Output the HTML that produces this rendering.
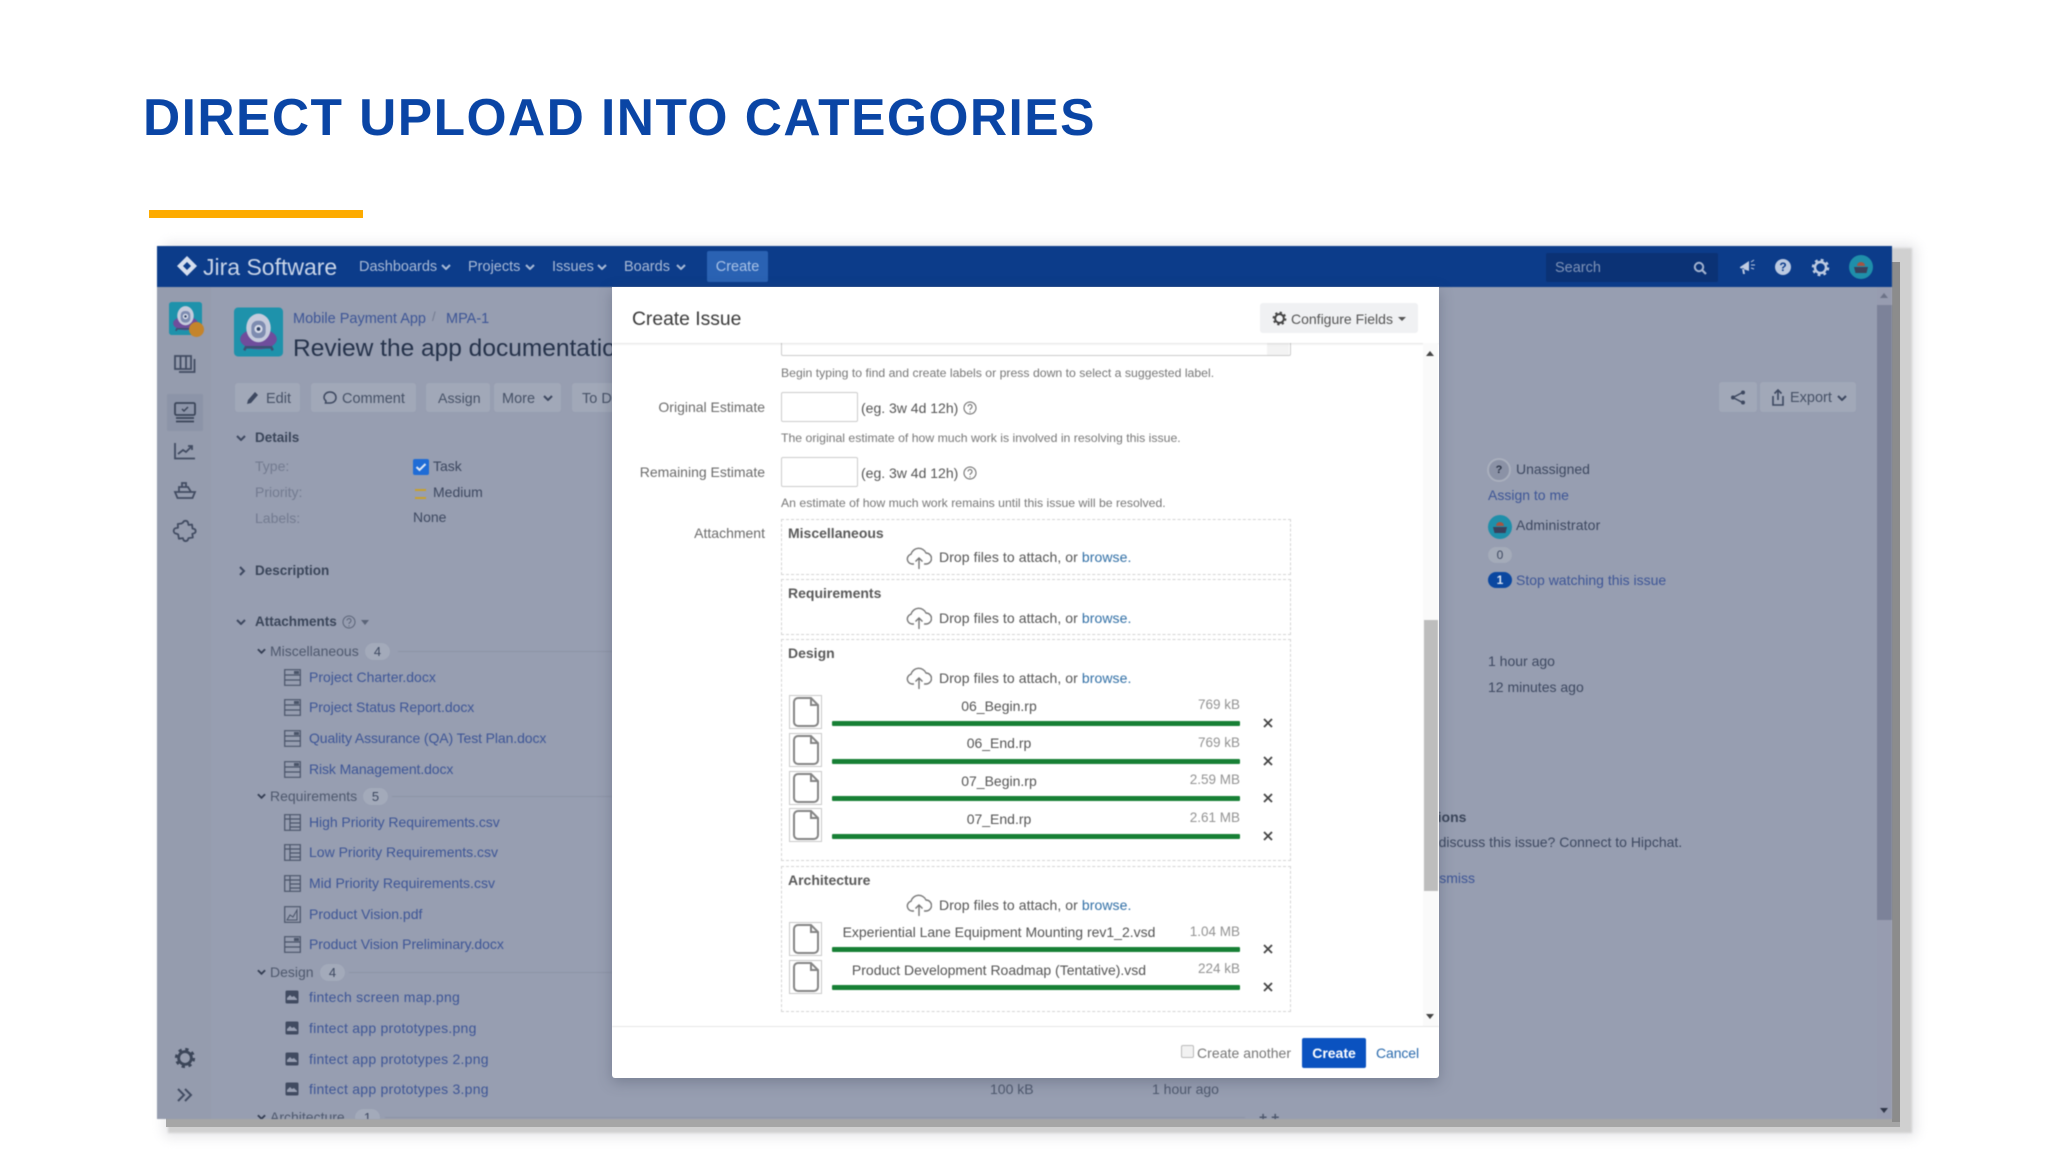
<!DOCTYPE html>
<html><head><meta charset="utf-8"><title>Direct Upload Into Categories</title>
<style>
html,body{margin:0;padding:0;background:#fff}
body{width:2048px;height:1152px;overflow:hidden;position:relative;font-family:"Liberation Sans",Arial,sans-serif}
.a{position:absolute}
.t{position:absolute;white-space:nowrap;line-height:20px;height:20px;font-size:14px;color:#3d4860}
.l{color:#3d5596}
.g{color:#737b90}
.b{font-weight:bold}
.n{color:#a9bad6;font-size:14.5px}
.btn{position:absolute;background:#a1a8b8;top:383px;height:29px;border-radius:3px}
.bd{position:absolute;background:#a3aaba;border-radius:9px;height:17px;width:25px;text-align:center;line-height:17px;font-size:13px;color:#3d4860}
.ln{position:absolute;height:1px;background:#8d94a7;right:0}
svg{position:absolute;overflow:visible}
.m{color:#6b6b6b}
.h{font-size:12.25px;color:#777}
.box{position:absolute;left:781px;width:508px;border:1px dashed #d4d4d4;box-sizing:content-box}
.bar{position:absolute;left:832px;width:408px;height:5px;background:#178035;border-radius:1px}
.lk{color:#2f6ea5}
.bh{font-weight:bold;color:#5a5a5a;font-size:14px}
.dp{letter-spacing:.08px;color:#555}
.sz{font-size:13.5px;color:#939393}
.hd{font-size:13.5px;color:#3a4559}
.inp{position:absolute;left:781px;width:75px;height:28px;border:1px solid #ccc;border-radius:2px;background:#fff}
.png{letter-spacing:.25px}
</style></head><body>
<svg width="0" height="0" style="position:absolute">
<defs>
<symbol id="ch" viewBox="0 0 10 6"><path d="M1 1l4 4 4-4" fill="none" stroke="currentColor" stroke-width="2"/></symbol>
<symbol id="doc" viewBox="0 0 33 34"><rect x=".5" y=".5" width="32" height="33" fill="#fff" stroke="#c9c9c9"/><path d="M9 3h13l7 7v17a4 4 0 0 1-4 4H9a4 4 0 0 1-4-4V7a4 4 0 0 1 4-4zM22 3v7h7" fill="none" stroke="#858585" stroke-width="2"/></symbol>
<symbol id="cl" viewBox="0 0 26 24"><path d="M8 18H6a5 5 0 0 1-1-9.800A8 8 0 0 1 20 7a5.500 5.500 0 0 1 0 11h-2" fill="none" stroke="#777" stroke-width="1.400"/><path d="M13 23V12M9.500 15.500L13 12l3.500 3.500" fill="none" stroke="#777" stroke-width="1.400"/></symbol>
<symbol id="x" viewBox="0 0 12 12"><path d="M2 2l8 8M10 2l-8 8" stroke="#444" stroke-width="1.800" fill="none"/></symbol>
<symbol id="q" viewBox="0 0 14 14"><circle cx="7" cy="7" r="6" fill="none" stroke="currentColor"/><path d="M5 5.500a2 2 0 1 1 3 1.800c-.8.500-1 .8-1 1.700M7 10.500v1" fill="none" stroke="currentColor"/></symbol>
<symbol id="w" viewBox="0 0 17 17"><path d="M.7.700h15.600v15.600H.7zM.7 6h15.600M.7 11h15.600" fill="none" stroke="#4a5469" stroke-width="1.200"/><rect x="10" y="2" width="5" height="3" fill="#4a5469"/></symbol>
<symbol id="c" viewBox="0 0 17 17"><path d="M.7.700h15.600v15.600H.7zM.7 5h15.600M6 .7v15.600M6 9h10M6 13h10" fill="none" stroke="#4a5469" stroke-width="1.200"/></symbol>
<symbol id="p" viewBox="0 0 17 17"><path d="M.7.700h15.600v15.600H.7z" fill="none" stroke="#4a5469" stroke-width="1.200"/><path d="M3 14l3-5 3 2 4-7v10z" fill="none" stroke="#4a5469"/></symbol>
<symbol id="im" viewBox="0 0 14 14"><rect width="13" height="13" x=".5" y=".5" rx="1.500" fill="#414b61"/><path d="M2 8l3-3 2 2 2-1 3 3v1H2z" fill="#99a0b3"/></symbol>
<symbol id="gr" viewBox="0 0 20 20"><circle cx="10" cy="10" r="5.800" fill="none" stroke="currentColor" stroke-width="2.600"/><circle cx="10" cy="10" r="8" fill="none" stroke="currentColor" stroke-width="2.400" stroke-dasharray="3 3.280"/></symbol>
<symbol id="rob" viewBox="0 0 48 48"><rect width="48" height="48" rx="4" fill="#1e92ab"/><ellipse cx="24" cy="31" rx="18" ry="10" fill="#6f4d9c"/><path d="M12 38l-2 4M36 38l2 4M12 39h24" stroke="#3c5174" stroke-width="2.500"/><ellipse cx="24" cy="20" rx="12" ry="14" fill="#c5cbdc"/><rect x="17" y="13" width="14" height="17" rx="6" fill="#7e8cb0"/><circle cx="24" cy="21" r="4" fill="#d7dcea"/><circle cx="24" cy="21" r="1.800" fill="#2f4063"/></symbol>
<symbol id="ad" viewBox="0 0 24 24"><circle cx="12" cy="12" r="12" fill="#1f8faa"/><path d="M5 12h14l-1.500 6h-11z" fill="#39415c"/><path d="M8 11a4 4 0 0 1 8 0z" fill="#a35443"/></symbol>
</defs></svg>

<div class="t b" id="ttl" style="left:143px;top:91px;height:52px;line-height:52px;font-size:51.500px;letter-spacing:1.450px;color:#0a45a5">DIRECT UPLOAD INTO CATEGORIES</div>
<div class="a" style="left:149px;top:210px;width:214px;height:8px;background:#fdab00"></div>

<div class="a" style="left:168px;top:248px;width:1744px;height:885px;background:#d0d0d0;box-shadow:0 0 12px 4px #e6e6e9;filter:blur(1px)"></div>
<div class="a" style="left:166px;top:262px;width:1734px;height:865px;background:#a6a6a6"></div>
<div class="a" style="left:1892px;top:262px;width:8px;height:860px;background:#8c8c8c"></div>

<div class="a" id="fr" style="left:157px;top:246px;width:1735px;height:873px;background:#979eb1;overflow:hidden;filter:blur(.5px)">
<div class="a" style="left:0;top:0;width:54px;height:873px;background:#959cae"></div>
<div class="a" style="left:0;top:0;width:1735px;height:41px;background:#0c3c8a"></div>
<div class="a" style="left:1720px;top:41px;width:15px;height:832px;background:#979cb0"></div>
<div class="a" style="left:1720px;top:59px;width:15px;height:615px;background:#7c8299"></div>
</div>

<div class="a" style="left:157px;top:246px;width:1735px;height:873px;overflow:hidden;filter:blur(.5px)">
<div style="position:absolute;left:-157px;top:-246px;width:2048px;height:1152px">

<!-- Nav -->
<svg style="left:176px;top:255px" width="22" height="22" viewBox="0 0 22 22"><path d="M11 1l10 10-10 10L1 11z" fill="#d5deee"/><path d="M11 7l4 4-4 4-4-4z" fill="#0c3c8a"/></svg>
<div class="t" style="left:203px;top:255px;height:24px;line-height:24px;font-size:23px;color:#c9d5e8">Jira Software</div>
<div class="t n" style="left:359px;top:257px">Dashboards</div><svg style="left:441px;top:264px;color:#a9bad6" width="10" height="6"><use href="#ch"/></svg>
<div class="t n" style="left:468px;top:257px">Projects</div><svg style="left:525px;top:264px;color:#a9bad6" width="10" height="6"><use href="#ch"/></svg>
<div class="t n" style="left:552px;top:257px">Issues</div><svg style="left:597px;top:264px;color:#a9bad6" width="10" height="6"><use href="#ch"/></svg>
<div class="t n" style="left:624px;top:257px">Boards</div><svg style="left:676px;top:264px;color:#a9bad6" width="10" height="6"><use href="#ch"/></svg>
<div class="a" style="left:707px;top:251px;width:61px;height:31px;background:#2a62b3;border-radius:2px"></div>
<div class="t" style="left:707px;width:61px;text-align:center;top:257px;font-size:14.500px;color:#a9c2e6">Create</div>
<div class="a" style="left:1546px;top:253px;width:172px;height:29px;background:#0b3275;border-radius:2px"></div>
<div class="t" style="left:1555px;top:258px;font-size:14.500px;color:#7f93b7">Search</div>
<svg style="left:1693px;top:261px" width="14" height="14" viewBox="0 0 14 14"><circle cx="6" cy="6" r="4.200" fill="none" stroke="#a3b3cf" stroke-width="2"/><path d="M9 9l4 4" stroke="#a3b3cf" stroke-width="2.200"/></svg>
<svg style="left:1739px;top:258px" width="17" height="17" viewBox="0 0 17 17"><path d="M1 9l9-6v10L1 10zM3 10l1 6h2l-1-5.500" fill="#c0cce2"/><path d="M12 4l3-2M12 7h4M12 10l3 1" stroke="#c0cce2"/></svg>
<div class="a" style="left:1775px;top:259px;width:16px;height:16px;border-radius:50%;background:#bccae1;text-align:center;line-height:16px;font-size:12px;font-weight:bold;color:#0c3c8a">?</div>
<svg style="left:1811px;top:258px;color:#bccae1" width="19" height="19"><use href="#gr"/></svg>
<svg style="left:1849px;top:255px" width="24" height="24"><use href="#ad"/></svg>

<!-- Left sidebar -->
<svg style="left:169px;top:302px" width="33" height="33"><use href="#rob"/></svg>
<div class="a" style="left:189px;top:322px;width:15px;height:15px;border-radius:50%;background:#c4842b"></div>
<svg style="left:174px;top:355px" width="22" height="19" viewBox="0 0 22 19"><path d="M1 1h16v13H1zM6.500 1v13M12 1v13M20.500 4v13H5" fill="none" stroke="#424c62" stroke-width="1.800"/></svg>
<div class="a" style="left:167px;top:394px;width:36px;height:37px;background:#8c94a8;border-radius:2px"></div>
<svg style="left:174px;top:402px" width="22" height="21" viewBox="0 0 22 21"><rect x="1" y="1" width="20" height="12" rx="1.500" fill="none" stroke="#3b4559" stroke-width="1.800"/><path d="M8 7l2 2 4-4" fill="none" stroke="#3b4559" stroke-width="1.500"/><path d="M2 16h18M2 19.500h18" stroke="#3b4559" stroke-width="1.800"/></svg>
<svg style="left:174px;top:443px" width="22" height="17" viewBox="0 0 22 17"><path d="M1 0v15.500h20M4 11l5-4 3 2 6-6M14 3h4v4" fill="none" stroke="#424c62" stroke-width="1.800"/></svg>
<svg style="left:174px;top:481px" width="22" height="18" viewBox="0 0 22 18"><path d="M1 11h20l-2.500 6H3.500zM5 11V6h9l3 5M8 6V2h4v4" fill="none" stroke="#424c62" stroke-width="1.800"/></svg>
<svg style="left:174px;top:519px" width="22" height="22" viewBox="0 0 22 22"><path d="M9 3.500a2.700 2.700 0 0 1 5 0L14.500 6l3.500-.5.500 4 1.800.5a2.300 2.300 0 0 1 0 4.200l-2 .6.500 3.700-4.300.6-.6 1.600a2.500 2.500 0 0 1-4.600-.3l-.4-1.300-4 .6-.7-4.200-1.800-.8A2.400 2.400 0 0 1 2.700 9L4 8.700 3.800 5l3.700-.5z" fill="none" stroke="#424c62" stroke-width="1.800" stroke-linejoin="round"/></svg>
<svg style="left:174px;top:1047px;color:#3c4659" width="22" height="22"><use href="#gr"/></svg>
<svg style="left:176px;top:1088px" width="18" height="14" viewBox="0 0 18 14"><path d="M2 1l6 6-6 6M9 1l6 6-6 6" fill="none" stroke="#424c62" stroke-width="2"/></svg>

<!-- Issue header -->
<svg style="left:234px;top:307px" width="49" height="50"><use href="#rob"/></svg>
<div class="t l" style="left:293px;top:309px;font-size:14.500px">Mobile Payment App</div>
<div class="t g" style="left:432px;top:307px;font-size:13px">/</div>
<div class="t l" style="left:446px;top:309px;font-size:14.500px">MPA-1</div>
<div class="t" style="left:293px;top:334px;height:30px;line-height:30px;font-size:24.500px;color:#25324a">Review the app documentation</div>

<div class="btn" style="left:235px;width:65px"></div><div class="btn" style="left:311px;width:105px"></div><div class="btn" style="left:426px;width:64px"></div><div class="btn" style="left:494px;width:67px"></div><div class="btn" style="left:572px;width:80px"></div>
<svg style="left:246px;top:391px" width="14" height="14" viewBox="0 0 14 14"><path d="M1 13l1-4 7-8 3 3-7 8z" fill="#3d4860"/></svg>
<div class="t" style="left:266px;top:388.500px;font-size:14.500px;color:#465166">Edit</div>
<svg style="left:323px;top:391px" width="14" height="14" viewBox="0 0 14 14"><path d="M7 1c3.500 0 6 2.300 6 5.500S10.500 12 7 12H2.500L3 10C1.800 9 1 7.800 1 6.500 1 3.300 3.500 1 7 1z" fill="none" stroke="#3d4860" stroke-width="1.500"/></svg>
<div class="t" style="left:342px;top:388.500px;font-size:14.500px;color:#465166">Comment</div>
<div class="t" style="left:438px;top:388.500px;font-size:14.200px;color:#465166">Assign</div>
<div class="t" style="left:502px;top:388.500px;font-size:14.500px;color:#465166">More</div><svg style="left:543px;top:395px;color:#3d4860" width="10" height="6"><use href="#ch"/></svg>
<div class="t" style="left:582px;top:388.500px;font-size:14.500px;color:#465166">To Do</div>

<!-- Details -->
<svg style="left:236px;top:435px;color:#3d4860" width="10" height="6"><use href="#ch"/></svg>
<div class="t b hd" style="left:255px;top:428px">Details</div>
<div class="t g" style="left:255px;top:456px">Type:</div>
<div class="a" style="left:413px;top:459px;width:16px;height:16px;background:#1f6cd6;border-radius:2px"></div>
<svg style="left:413px;top:459px" width="16" height="16" viewBox="0 0 16 16"><path d="M3.500 8l3 3 6-6" fill="none" stroke="#dfe8f6" stroke-width="2"/></svg>
<div class="t" style="left:433px;top:456px">Task</div>
<div class="t g" style="left:255px;top:482px">Priority:</div>
<div class="a" style="left:415px;top:489px;width:11px;height:2px;background:#c8a02c"></div><div class="a" style="left:415px;top:497px;width:11px;height:2px;background:#c8a02c"></div>
<div class="t" style="left:433px;top:482px">Medium</div>
<div class="t g" style="left:255px;top:508px">Labels:</div>
<div class="t" style="left:413px;top:507px">None</div>
<svg style="left:239px;top:566px;color:#3d4860" width="6" height="10" viewBox="0 0 6 10"><path d="M1 1l4 4-4 4" fill="none" stroke="currentColor" stroke-width="2"/></svg>
<div class="t b hd" style="left:255px;top:561px">Description</div>
<svg style="left:236px;top:619px;color:#3d4860" width="10" height="6"><use href="#ch"/></svg>
<div class="t b hd" style="left:255px;top:612px">Attachments</div>
<svg style="left:342px;top:615px;color:#5b6478" width="14" height="14"><use href="#q"/></svg>
<div class="a" style="left:361px;top:620px;border:4px solid transparent;border-top:5px solid #5b6478;border-bottom:0"></div>

<!-- Attachment tree -->
<svg style="left:257px;top:648px;color:#333d52" width="9" height="6"><use href="#ch"/></svg>
<div class="t" style="left:270px;top:641px;color:#4e586d">Miscellaneous</div><div class="bd" style="left:365px;top:643px">4</div><div class="ln" style="left:398px;top:651px;width:214px"></div>
<svg style="left:284px;top:669px" width="17" height="17"><use href="#w"/></svg><div class="t l" style="left:309px;top:667px">Project Charter.docx</div>
<svg style="left:284px;top:699px" width="17" height="17"><use href="#w"/></svg><div class="t l" style="left:309px;top:697px;letter-spacing:-.05px">Project Status Report.docx</div>
<svg style="left:284px;top:730px" width="17" height="17"><use href="#w"/></svg><div class="t l" style="left:309px;top:728px;letter-spacing:-.1px">Quality Assurance (QA) Test Plan.docx</div>
<svg style="left:284px;top:761px" width="17" height="17"><use href="#w"/></svg><div class="t l" style="left:309px;top:759px;letter-spacing:-.1px">Risk Management.docx</div>
<svg style="left:257px;top:793px;color:#333d52" width="9" height="6"><use href="#ch"/></svg>
<div class="t" style="left:270px;top:786px;color:#4e586d">Requirements</div><div class="bd" style="left:363px;top:788px">5</div><div class="ln" style="left:392px;top:796px;width:220px"></div>
<svg style="left:284px;top:814px" width="17" height="17"><use href="#c"/></svg><div class="t l" style="left:309px;top:812px;letter-spacing:-.05px">High Priority Requirements.csv</div>
<svg style="left:284px;top:844px" width="17" height="17"><use href="#c"/></svg><div class="t l" style="left:309px;top:842px">Low Priority Requirements.csv</div>
<svg style="left:284px;top:875px" width="17" height="17"><use href="#c"/></svg><div class="t l" style="left:309px;top:873px">Mid Priority Requirements.csv</div>
<svg style="left:284px;top:906px" width="17" height="17"><use href="#p"/></svg><div class="t l" style="left:309px;top:904px">Product Vision.pdf</div>
<svg style="left:284px;top:936px" width="17" height="17"><use href="#w"/></svg><div class="t l" style="left:309px;top:934px;letter-spacing:-.05px">Product Vision Preliminary.docx</div>
<svg style="left:257px;top:969px;color:#333d52" width="9" height="6"><use href="#ch"/></svg>
<div class="t" style="left:270px;top:962px;color:#4e586d">Design</div><div class="bd" style="left:320px;top:964px">4</div><div class="ln" style="left:349px;top:972px;width:263px"></div>
<svg style="left:285px;top:990px" width="14" height="14"><use href="#im"/></svg><div class="t l png" style="left:309px;top:987px">fintech screen map.png</div>
<svg style="left:285px;top:1021px" width="14" height="14"><use href="#im"/></svg><div class="t l png" style="left:309px;top:1018px">fintect app prototypes.png</div>
<svg style="left:285px;top:1052px" width="14" height="14"><use href="#im"/></svg><div class="t l png" style="left:309px;top:1049px">fintect app prototypes 2.png</div>
<svg style="left:285px;top:1082px" width="14" height="14"><use href="#im"/></svg><div class="t l png" style="left:309px;top:1079px">fintect app prototypes 3.png</div>
<svg style="left:257px;top:1114px;color:#333d52" width="9" height="6"><use href="#ch"/></svg>
<div class="t" style="left:270px;top:1107px;color:#4e586d">Architecture</div><div class="bd" style="left:355px;top:1109px">1</div><div class="ln" style="left:385px;top:1117px;width:860px"></div>
<div class="t g" style="left:990px;top:1079px;color:#4e586d">100 kB</div>
<div class="t g" style="left:1152px;top:1079px;color:#4e586d">1 hour ago</div>
<div class="t b" style="left:1259px;top:1107px;color:#4e586d">+ +</div>

<!-- Right column -->
<div class="btn" style="left:1719px;width:38px;top:382px;height:30px"></div><div class="btn" style="left:1760px;width:96px;top:382px;height:30px"></div>
<svg style="left:1730px;top:390px" width="16" height="15" viewBox="0 0 16 15"><path d="M12.500 2.500L3 7.500l9.500 5" fill="none" stroke="#3d4860" stroke-width="1.500"/><circle cx="13" cy="2.500" r="2" fill="#3d4860"/><circle cx="3" cy="7.500" r="2" fill="#3d4860"/><circle cx="13" cy="12.500" r="2" fill="#3d4860"/></svg>
<svg style="left:1771px;top:389px" width="14" height="17" viewBox="0 0 14 17"><path d="M2 7v9h10V7M7 11V1M3.500 4.500L7 1l3.500 3.500" fill="none" stroke="#3d4860" stroke-width="1.600"/></svg>
<div class="t" style="left:1790px;top:388px;font-size:14.500px;color:#465166">Export</div><svg style="left:1837px;top:395px;color:#3d4860" width="10" height="6"><use href="#ch"/></svg>

<div class="a" style="left:1487px;top:458px;width:20px;height:20px;border:2px solid #a9afbd;border-radius:50%;background:#8b92a6;text-align:center;line-height:20px;font-size:11px;font-weight:bold;color:#2c3548">?</div>
<div class="t" style="left:1516px;top:459px">Unassigned</div>
<div class="t l" style="left:1488px;top:485px">Assign to me</div>
<svg style="left:1488px;top:515px" width="24" height="24"><use href="#ad"/></svg>
<div class="t" style="left:1516px;top:515px;letter-spacing:.15px">Administrator</div>
<div class="a" style="left:1488px;top:547px;width:24px;height:16px;border-radius:8px;background:#a4abb9;text-align:center;line-height:16px;font-size:12px;color:#3d4860">0</div>
<div class="a" style="left:1488px;top:572px;width:24px;height:16px;border-radius:8px;background:#0a47a0;text-align:center;line-height:16px;font-size:12px;font-weight:bold;color:#d5e0f0">1</div>
<div class="t l" style="left:1516px;top:570px">Stop watching this issue</div>
<div class="t" style="left:1488px;top:651px">1 hour ago</div>
<div class="t" style="left:1488px;top:677px">12 minutes ago</div>
<div class="t b" style="left:1405px;top:807px;color:#3a4559">Mentions</div>
<div class="t" style="left:1387px;top:832px">Want to discuss this issue? Connect to Hipchat.</div>
<div class="t l" style="left:1426px;top:868px">Dismiss</div>
<div class="a" style="left:1880px;top:293px;border:4px solid transparent;border-bottom:5px solid #6d7388;border-top:0"></div>
<div class="a" style="left:1880px;top:1108px;border:4px solid transparent;border-top:5px solid #2f3648;border-bottom:0"></div>
</div></div>

<!-- Modal -->
<div class="a" style="left:612px;top:287px;width:827px;height:791px;background:#fff;border-radius:0 0 3px 3px;box-shadow:0 4px 14px rgba(60,70,90,.35);overflow:hidden">
<div style="position:absolute;left:-612px;top:-287px;width:2048px;height:1152px;filter:blur(.4px)">
<div class="a" style="left:781px;top:340px;width:508px;height:15px;border:1px solid #ccc;border-top:0;border-radius:0 0 2px 2px"></div>
<div class="a" style="left:1267px;top:343px;width:22px;height:12px;background:#f3f3f3"></div>
<div class="t g" style="left:727px;top:329px;font-size:13px;color:#777">Labels</div>
<div class="a" style="left:612px;top:287px;width:827px;height:56px;background:#fff;box-shadow:0 1px 2px rgba(0,0,0,.12)"></div>
<div class="t" style="left:632px;top:308px;height:24px;line-height:24px;font-size:19.300px;color:#3a3a3a">Create Issue</div>
<div class="a" style="left:1260px;top:303px;width:158px;height:30px;background:#f0f1f3;border-radius:3px"></div>
<svg style="left:1272px;top:311px;color:#444" width="15" height="15"><use href="#gr"/></svg>
<div class="t" style="left:1291px;top:309px;font-size:14px;color:#555">Configure Fields</div>
<div class="a" style="left:1398px;top:317px;border:4px solid transparent;border-top:4px solid #555;border-bottom:0"></div>

<div class="t h" style="left:781px;top:363px">Begin typing to find and create labels or press down to select a suggested label.</div>
<div class="t m" style="left:615px;width:150px;text-align:right;top:397px">Original Estimate</div>
<div class="inp" style="top:392px"></div>
<div class="t m" style="left:861px;top:398px;color:#555">(eg. 3w 4d 12h)</div>
<svg style="left:963px;top:401px;color:#666" width="14" height="14"><use href="#q"/></svg>
<div class="t h" style="left:781px;top:428px">The original estimate of how much work is involved in resolving this issue.</div>
<div class="t m" style="left:615px;width:150px;text-align:right;top:462px">Remaining Estimate</div>
<div class="inp" style="top:457px"></div>
<div class="t m" style="left:861px;top:463px;color:#555">(eg. 3w 4d 12h)</div>
<svg style="left:963px;top:466px;color:#666" width="14" height="14"><use href="#q"/></svg>
<div class="t h" style="left:781px;top:493px">An estimate of how much work remains until this issue will be resolved.</div>
<div class="t m" style="left:615px;width:150px;text-align:right;top:523px">Attachment</div>

<div class="box" style="top:519px;height:54px"></div>
<div class="t bh" style="left:788px;top:523px">Miscellaneous</div>
<svg style="left:906px;top:546px" width="26" height="24"><use href="#cl"/></svg>
<div class="t dp" style="left:939px;top:547px">Drop files to attach, or <span class="lk">browse.</span></div>

<div class="box" style="top:579px;height:54px"></div>
<div class="t bh" style="left:788px;top:583px">Requirements</div>
<svg style="left:906px;top:606px" width="26" height="24"><use href="#cl"/></svg>
<div class="t dp" style="left:939px;top:608px">Drop files to attach, or <span class="lk">browse.</span></div>

<div class="box" style="top:639px;height:220px"></div>
<div class="t bh" style="left:788px;top:643px">Design</div>
<svg style="left:906px;top:666px" width="26" height="24"><use href="#cl"/></svg>
<div class="t dp" style="left:939px;top:668px">Drop files to attach, or <span class="lk">browse.</span></div>

<svg style="left:789px;top:695px" width="33" height="34"><use href="#doc"/></svg>
<div class="t m" style="left:832px;width:334px;text-align:center;top:695.500px;color:#555">06_Begin.rp</div>
<div class="t sz" style="left:1150px;width:90px;text-align:right;top:695px">769 kB</div>
<div class="bar" style="top:721px"></div><svg style="left:1262px;top:717px" width="12" height="12"><use href="#x"/></svg>

<svg style="left:789px;top:733px" width="33" height="34"><use href="#doc"/></svg>
<div class="t m" style="left:832px;width:334px;text-align:center;top:733px;color:#555">06_End.rp</div>
<div class="t sz" style="left:1150px;width:90px;text-align:right;top:733px">769 kB</div>
<div class="bar" style="top:759px"></div><svg style="left:1262px;top:755px" width="12" height="12"><use href="#x"/></svg>

<svg style="left:789px;top:771px" width="33" height="34"><use href="#doc"/></svg>
<div class="t m" style="left:832px;width:334px;text-align:center;top:771px;color:#555">07_Begin.rp</div>
<div class="t sz" style="left:1150px;width:90px;text-align:right;top:770px">2.59 MB</div>
<div class="bar" style="top:796px"></div><svg style="left:1262px;top:792px" width="12" height="12"><use href="#x"/></svg>

<svg style="left:789px;top:808px" width="33" height="34"><use href="#doc"/></svg>
<div class="t m" style="left:832px;width:334px;text-align:center;top:808.500px;color:#555">07_End.rp</div>
<div class="t sz" style="left:1150px;width:90px;text-align:right;top:808px">2.61 MB</div>
<div class="bar" style="top:834px"></div><svg style="left:1262px;top:830px" width="12" height="12"><use href="#x"/></svg>

<div class="box" style="top:866px;height:144px"></div>
<div class="t bh" style="left:788px;top:870px">Architecture</div>
<svg style="left:906px;top:893px" width="26" height="24"><use href="#cl"/></svg>
<div class="t dp" style="left:939px;top:894.500px">Drop files to attach, or <span class="lk">browse.</span></div>

<svg style="left:789px;top:922px" width="33" height="34"><use href="#doc"/></svg>
<div class="t m" style="left:832px;width:334px;text-align:center;top:922px;color:#555">Experiential Lane Equipment Mounting rev1_2.vsd</div>
<div class="t sz" style="left:1150px;width:90px;text-align:right;top:922px">1.04 MB</div>
<div class="bar" style="top:947px"></div><svg style="left:1262px;top:943px" width="12" height="12"><use href="#x"/></svg>

<svg style="left:789px;top:960px" width="33" height="34"><use href="#doc"/></svg>
<div class="t m" style="left:832px;width:334px;text-align:center;top:959.500px;color:#555">Product Development Roadmap (Tentative).vsd</div>
<div class="t sz" style="left:1150px;width:90px;text-align:right;top:959px">224 kB</div>
<div class="bar" style="top:985px"></div><svg style="left:1262px;top:981px" width="12" height="12"><use href="#x"/></svg>

<div class="a" style="left:1423px;top:343px;width:15px;height:684px;background:#fafafa"></div>
<div class="a" style="left:1424px;top:620px;width:14px;height:271px;background:#bdbdbd"></div>
<div class="a" style="left:1426px;top:351px;border:4px solid transparent;border-bottom:5px solid #444;border-top:0"></div>
<div class="a" style="left:1426px;top:1014px;border:4px solid transparent;border-top:5px solid #444;border-bottom:0"></div>

<div class="a" style="left:612px;top:1026px;width:827px;height:1px;background:#e6e6e6"></div>
<div class="a" style="left:1181px;top:1045px;width:11px;height:11px;border:1px solid #bbb;background:#f2f2f2;border-radius:2px"></div>
<div class="t" style="left:1197px;top:1043px;color:#777;letter-spacing:.05px">Create another</div>
<div class="a" style="left:1302px;top:1038px;width:64px;height:30px;background:#0a52c0;border-radius:2px"></div>
<div class="t b" style="left:1302px;width:64px;text-align:center;top:1043px;color:#fff">Create</div>
<div class="t" style="left:1376px;top:1043px;color:#2a6aad;letter-spacing:-.1px">Cancel</div>
</div></div>
</body></html>
